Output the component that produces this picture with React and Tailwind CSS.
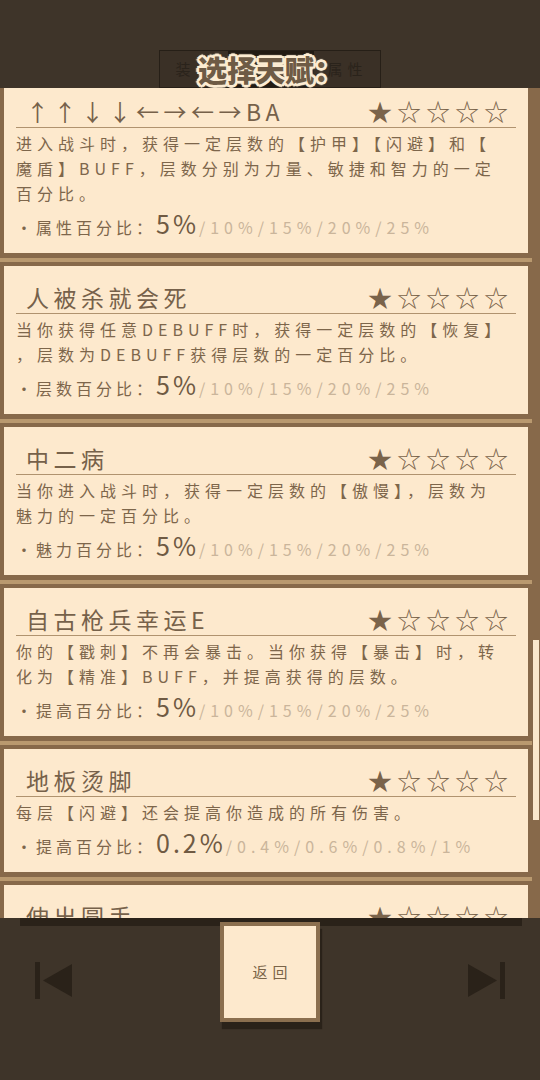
const talents = [
  {
    name: '↑↑↓↓←→←→BA',
    lines: ['进入战斗时，获得一定层数的【护甲】【闪避】和【', '魔盾】BUFF，层数分别为力量、敏捷和智力的一定', '百分比。'],
    label: '属性百分比：',
    cur: '5%',
    rest: '/10%/15%/20%/25%',
  },
  {
    name: '人被杀就会死',
    lines: ['当你获得任意DEBUFF时，获得一定层数的【恢复】', '，层数为DEBUFF获得层数的一定百分比。'],
    label: '层数百分比：',
    cur: '5%',
    rest: '/10%/15%/20%/25%',
  },
  {
    name: '中二病',
    lines: ['当你进入战斗时，获得一定层数的【傲慢】，层数为', '魅力的一定百分比。'],
    label: '魅力百分比：',
    cur: '5%',
    rest: '/10%/15%/20%/25%',
  },
  {
    name: '自古枪兵幸运E',
    lines: ['你的【戳刺】不再会暴击。当你获得【暴击】时，转', '化为【精准】BUFF，并提高获得的层数。'],
    label: '提高百分比：',
    cur: '5%',
    rest: '/10%/15%/20%/25%',
  },
  {
    name: '地板烫脚',
    lines: ['每层【闪避】还会提高你造成的所有伤害。'],
    label: '提高百分比：',
    cur: '0.2%',
    rest: '/0.4%/0.6%/0.8%/1%',
  },
  {
    name: '伸出圆手',
    lines: ['获得一定层数的【援护】，层数为体质的一定百分比。'],
    label: '援护百分比：',
    cur: '5%',
    rest: '/10%/15%/20%/25%',
  },
]

const TalentCard = ({ t }) => (
  <>
    <div className="border-x-4 border-t-4 border-b-[5px] border-[#87694a] bg-[#fde9cd] px-[12px] pt-[15px] pb-[13px]">
      <div className="flex h-[33px] items-center justify-between border-b border-[#b0936f] pl-[10px] pr-[3px]">
        <span className="whitespace-nowrap text-[23px] leading-none tracking-[4.5px] text-[#76614a]">{t.name}</span>
        <span className="whitespace-nowrap text-[24px] leading-none tracking-[5px] text-[#7a634a]">★☆☆☆☆</span>
      </div>
      <div className="mt-[3px] text-[16px] leading-[25px] tracking-[5px] text-[#7d664b]">
        {t.lines.map((line) => (
          <div key={line} className="whitespace-nowrap">{line}</div>
        ))}
      </div>
      <div className="flex h-[34px] items-center">
        <p className="whitespace-nowrap leading-none">
          <span className="text-[16px] tracking-[4px] text-[#7d664b]">・{t.label}</span>
          <span className="text-[25px] tracking-[3px] text-[#6f5a43]">{t.cur}</span>
          <span className="text-[16px] tracking-[5px] text-[#cab59b]">{t.rest}</span>
        </p>
      </div>
    </div>
    <div className="h-[4px] shrink-0 bg-[#b9996f]" />
  </>
)

const SkipIcon = ({ flip }) => (
  <svg width="37" height="37" viewBox="0 0 37 37" className={flip ? 'scale-x-[-1]' : ''}>
    <rect x="0" y="0" width="5" height="37" fill="#2a2219" />
    <polygon points="8,18.5 37,2 37,35" fill="#2a2219" />
  </svg>
)

export default function App() {
  return (
    <div className="flex h-[1080px] w-[540px] flex-col overflow-hidden bg-[#3e3429] font-['Noto_Sans_CJK_SC','Noto_Sans',sans-serif]">
      {/* header tabs */}
      <div className="flex h-[88px] shrink-0 justify-center pt-[50px] pr-[1px]">
        <div className="relative flex h-[38px] w-[222px] border border-[#261f17] bg-[#3a3026]">
          <div className="flex w-[68px] items-center pl-[16px] text-[15px] text-[#2a231b]">装</div>
          <div className="w-[86px] bg-[#221b13]" />
          <div className="flex flex-1 items-center pl-[14px] text-[15px] tracking-[5px] text-[#2a231b]">属性</div>
          <div className="absolute inset-0 flex items-center justify-center pl-[2px] pt-[1px]">
            <span className="whitespace-nowrap text-[29px] font-black leading-none text-[#6e5b45] [text-shadow:2px_0_0_#fcecd2,-2px_0_0_#fcecd2,0_2px_0_#fcecd2,0_-2px_0_#fcecd2,2px_2px_0_#fcecd2,-2px_-2px_0_#fcecd2,2px_-2px_0_#fcecd2,-2px_2px_0_#fcecd2,3px_0_1px_#fcecd2,-3px_0_1px_#fcecd2,0_3px_1px_#fcecd2,0_-3px_1px_#fcecd2]">
              选择天赋：
            </span>
          </div>
        </div>
      </div>

      {/* talent list */}
      <div className="flex h-[830px] shrink-0 overflow-hidden bg-[#87694a]">
        <div className="mt-[-12px] flex w-[532px] shrink-0 flex-col">
          {talents.map((t) => (
            <TalentCard key={t.name} t={t} />
          ))}
        </div>
        <div className="flex-1 pt-[552px] pl-[1px] pr-[1px]">
          <div className="h-[180px] bg-[#fbe8cc]" />
        </div>
      </div>

      {/* bottom controls */}
      <div className="flex flex-1 flex-col">
        <div className="ml-[20px] mr-[18px] h-[8px] bg-[#2a2219]" />
        <div className="mt-[-4px] flex items-start">
          <div className="w-[220px] pt-[40px] pl-[35px]">
            <SkipIcon />
          </div>
          <div className="flex h-[100px] w-[100px] items-center justify-center border-4 border-[#8b6f4f] bg-[#fde9cd] shadow-[2px_7px_1px_#2a2219]">
            <span className="pl-[5px] text-[15px] tracking-[5px] text-[#7a6448]">返回</span>
          </div>
          <div className="flex flex-1 justify-end pt-[40px] pr-[35px]">
            <SkipIcon flip />
          </div>
        </div>
      </div>
    </div>
  )
}
